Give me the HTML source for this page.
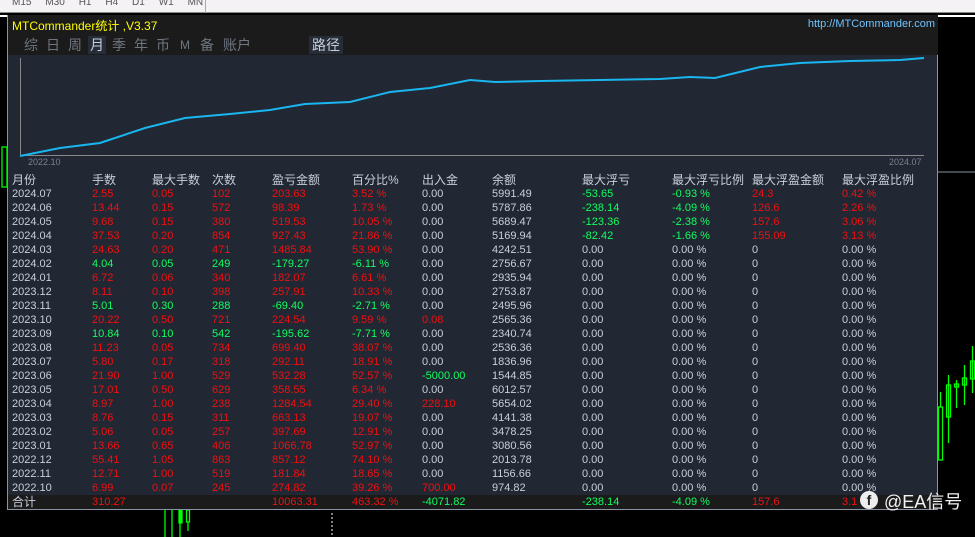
<!DOCTYPE html>
<html><head><meta charset="utf-8"><style>
*{margin:0;padding:0;box-sizing:border-box}
body{width:975px;height:537px;background:#000;position:relative;overflow:hidden;font-family:"Liberation Sans","Noto Sans CJK SC",sans-serif;}
.top{position:absolute;left:0;top:0;width:975px;height:13px;background:#f4f2f4;border-bottom:1px solid #888;font-size:10px;color:#555}
.panel{position:absolute;left:7px;top:15px;width:931px;height:495px;background:#212733;border:1px solid #8a94a4;border-top:none}
.title{position:absolute;left:0;top:0;width:930px;height:40px;background:#1b1b1b}
.t1{position:absolute;left:4px;top:2px;color:#ffff00;font-size:12px}
.url{position:absolute;right:3px;top:3px;color:#6fc4ff;font-size:11px}
.tabs{position:absolute;left:16px;top:21px;font-size:14px;color:#6f7680;letter-spacing:0}
.tabs span{position:absolute;top:0;white-space:nowrap;line-height:18px}
.row{position:absolute;left:4px;height:14px;font-size:11px;line-height:14px;white-space:nowrap;color:#c8d0dc}
.row span{position:absolute;top:0}
.h{font-size:12px}
.r{color:#f01010}.g{color:#10ff60}.w{color:#c8d0dc}
.c0{left:0}.c1{left:80px}.c2{left:140px}.c3{left:200px}.c4{left:260px}.c5{left:340px}.c6{left:410px}.c7{left:480px}.c8{left:570px}.c9{left:660px}.c10{left:740px}.c11{left:830px}
.tot{position:absolute;left:0;top:480px;width:930px;height:14px;background:#1b1b1b}
</style></head><body>
<div class="top"><span style="position:absolute;left:12px;top:-3px">M15 &nbsp;&nbsp;&nbsp; M30 &nbsp;&nbsp;&nbsp; H1 &nbsp;&nbsp;&nbsp; H4 &nbsp;&nbsp;&nbsp; D1 &nbsp;&nbsp;&nbsp; W1 &nbsp;&nbsp;&nbsp; MN</span><div style="position:absolute;left:205px;top:0;width:1px;height:13px;background:#aaa"></div></div>
<div style="position:absolute;left:0;top:15px;width:975px;height:2px;background:#fff"></div>
<svg style="position:absolute;left:0;top:0" width="975" height="537">
<line x1="937" y1="172" x2="975" y2="172" stroke="#8a94a4"/>
<g stroke="#00ff00" fill="none" stroke-width="1.3">
<rect x="938.5" y="407" width="4" height="53"/><line x1="940.5" y1="392" x2="940.5" y2="407"/>
<rect x="946.5" y="385" width="4" height="32"/><line x1="948.5" y1="375" x2="948.5" y2="443"/>
<rect x="954.5" y="384" width="4" height="3"/><line x1="956.5" y1="380" x2="956.5" y2="408"/>
<rect x="962.5" y="378" width="4" height="7"/><line x1="964.5" y1="365" x2="964.5" y2="405"/>
<rect x="970.5" y="361" width="4" height="18"/><line x1="972.5" y1="346" x2="972.5" y2="393"/>
<line x1="165" y1="510" x2="165" y2="537"/><line x1="172" y1="510" x2="172" y2="537"/><line x1="180" y1="510" x2="180" y2="537"/>
<rect x="179" y="510" width="3" height="13" fill="#00ff00"/><rect x="186.5" y="510" width="3" height="12"/><line x1="188" y1="522" x2="188" y2="531"/>
<rect x="2" y="147" width="5" height="40"/>
</g>
<line x1="332" y1="513" x2="332" y2="537" stroke="#fff" stroke-dasharray="2,2"/>
</svg>
<div class="panel">
<div class="title"><div class="t1">MTCommander统计 ,V3.37</div><div class="url">http://MTCommander.com</div>
<div class="tabs"><span style="left:0">综</span><span style="left:22px">日</span><span style="left:44px">周</span><span style="left:64px;background:#262c38;color:#c8d0dc;padding:0 2px">月</span><span style="left:88px">季</span><span style="left:110px">年</span><span style="left:132px">币</span><span style="left:156px;font-size:12px">M</span><span style="left:176px">备</span><span style="left:199px">账户</span><span style="left:285px;background:#262c38;color:#c8d0dc;padding:0 3px">路径</span></div></div>
<svg style="position:absolute;left:0;top:40px" width="930" height="120">
<line x1="12.5" y1="3" x2="12.5" y2="101" stroke="#888"/><line x1="12" y1="100.5" x2="916" y2="100.5" stroke="#888"/>
<polyline fill="none" stroke="#1ab6f0" stroke-width="2" points="12,101 52,93 92,88 137,73 177,63 222,59 262,55 297,49 342,47 382,37 422,33 462,25 487,27 532,26 592,25 652,24 682,22 707,23 752,12 792,8 842,6 892,5 916,3"/>
</svg>
<div style="position:absolute;left:20px;top:142px;font-size:9px;color:#7a8290">2022.10</div>
<div style="position:absolute;left:881px;top:142px;font-size:9px;color:#7a8290">2024.07</div>
<div class="row h" style="top:158px"><span class="c0">月份</span><span class="c1">手数</span><span class="c2">最大手数</span><span class="c3">次数</span><span class="c4">盈亏金额</span><span class="c5">百分比%</span><span class="c6">出入金</span><span class="c7">余额</span><span class="c8">最大浮亏</span><span class="c9">最大浮亏比例</span><span class="c10">最大浮盈金额</span><span class="c11">最大浮盈比例</span></div>
<div class="row" style="top:172px"><span class="c0">2024.07</span><span class="c1 r">2.55</span><span class="c2 r">0.05</span><span class="c3 r">102</span><span class="c4 r">203.63</span><span class="c5 r">3.52 %</span><span class="c6">0.00</span><span class="c7">5991.49</span><span class="c8 g">-53.65</span><span class="c9 g">-0.93 %</span><span class="c10 r">24.3</span><span class="c11 r">0.42 %</span></div>
<div class="row" style="top:186px"><span class="c0">2024.06</span><span class="c1 r">13.44</span><span class="c2 r">0.15</span><span class="c3 r">572</span><span class="c4 r">98.39</span><span class="c5 r">1.73 %</span><span class="c6">0.00</span><span class="c7">5787.86</span><span class="c8 g">-238.14</span><span class="c9 g">-4.09 %</span><span class="c10 r">126.6</span><span class="c11 r">2.26 %</span></div>
<div class="row" style="top:200px"><span class="c0">2024.05</span><span class="c1 r">9.68</span><span class="c2 r">0.15</span><span class="c3 r">380</span><span class="c4 r">519.53</span><span class="c5 r">10.05 %</span><span class="c6">0.00</span><span class="c7">5689.47</span><span class="c8 g">-123.36</span><span class="c9 g">-2.38 %</span><span class="c10 r">157.6</span><span class="c11 r">3.06 %</span></div>
<div class="row" style="top:214px"><span class="c0">2024.04</span><span class="c1 r">37.53</span><span class="c2 r">0.20</span><span class="c3 r">854</span><span class="c4 r">927.43</span><span class="c5 r">21.86 %</span><span class="c6">0.00</span><span class="c7">5169.94</span><span class="c8 g">-82.42</span><span class="c9 g">-1.66 %</span><span class="c10 r">155.09</span><span class="c11 r">3.13 %</span></div>
<div class="row" style="top:228px"><span class="c0">2024.03</span><span class="c1 r">24.63</span><span class="c2 r">0.20</span><span class="c3 r">471</span><span class="c4 r">1485.84</span><span class="c5 r">53.90 %</span><span class="c6">0.00</span><span class="c7">4242.51</span><span class="c8">0.00</span><span class="c9">0.00 %</span><span class="c10">0</span><span class="c11">0.00 %</span></div>
<div class="row" style="top:242px"><span class="c0">2024.02</span><span class="c1 g">4.04</span><span class="c2 g">0.05</span><span class="c3 g">249</span><span class="c4 g">-179.27</span><span class="c5 g">-6.11 %</span><span class="c6">0.00</span><span class="c7">2756.67</span><span class="c8">0.00</span><span class="c9">0.00 %</span><span class="c10">0</span><span class="c11">0.00 %</span></div>
<div class="row" style="top:256px"><span class="c0">2024.01</span><span class="c1 r">6.72</span><span class="c2 r">0.06</span><span class="c3 r">340</span><span class="c4 r">182.07</span><span class="c5 r">6.61 %</span><span class="c6">0.00</span><span class="c7">2935.94</span><span class="c8">0.00</span><span class="c9">0.00 %</span><span class="c10">0</span><span class="c11">0.00 %</span></div>
<div class="row" style="top:270px"><span class="c0">2023.12</span><span class="c1 r">8.11</span><span class="c2 r">0.10</span><span class="c3 r">398</span><span class="c4 r">257.91</span><span class="c5 r">10.33 %</span><span class="c6">0.00</span><span class="c7">2753.87</span><span class="c8">0.00</span><span class="c9">0.00 %</span><span class="c10">0</span><span class="c11">0.00 %</span></div>
<div class="row" style="top:284px"><span class="c0">2023.11</span><span class="c1 g">5.01</span><span class="c2 g">0.30</span><span class="c3 g">288</span><span class="c4 g">-69.40</span><span class="c5 g">-2.71 %</span><span class="c6">0.00</span><span class="c7">2495.96</span><span class="c8">0.00</span><span class="c9">0.00 %</span><span class="c10">0</span><span class="c11">0.00 %</span></div>
<div class="row" style="top:298px"><span class="c0">2023.10</span><span class="c1 r">20.22</span><span class="c2 r">0.50</span><span class="c3 r">721</span><span class="c4 r">224.54</span><span class="c5 r">9.59 %</span><span class="c6 r">0.08</span><span class="c7">2565.36</span><span class="c8">0.00</span><span class="c9">0.00 %</span><span class="c10">0</span><span class="c11">0.00 %</span></div>
<div class="row" style="top:312px"><span class="c0">2023.09</span><span class="c1 g">10.84</span><span class="c2 g">0.10</span><span class="c3 g">542</span><span class="c4 g">-195.62</span><span class="c5 g">-7.71 %</span><span class="c6">0.00</span><span class="c7">2340.74</span><span class="c8">0.00</span><span class="c9">0.00 %</span><span class="c10">0</span><span class="c11">0.00 %</span></div>
<div class="row" style="top:326px"><span class="c0">2023.08</span><span class="c1 r">11.23</span><span class="c2 r">0.05</span><span class="c3 r">734</span><span class="c4 r">699.40</span><span class="c5 r">38.07 %</span><span class="c6">0.00</span><span class="c7">2536.36</span><span class="c8">0.00</span><span class="c9">0.00 %</span><span class="c10">0</span><span class="c11">0.00 %</span></div>
<div class="row" style="top:340px"><span class="c0">2023.07</span><span class="c1 r">5.80</span><span class="c2 r">0.17</span><span class="c3 r">318</span><span class="c4 r">292.11</span><span class="c5 r">18.91 %</span><span class="c6">0.00</span><span class="c7">1836.96</span><span class="c8">0.00</span><span class="c9">0.00 %</span><span class="c10">0</span><span class="c11">0.00 %</span></div>
<div class="row" style="top:354px"><span class="c0">2023.06</span><span class="c1 r">21.90</span><span class="c2 r">1.00</span><span class="c3 r">529</span><span class="c4 r">532.28</span><span class="c5 r">52.57 %</span><span class="c6 g">-5000.00</span><span class="c7">1544.85</span><span class="c8">0.00</span><span class="c9">0.00 %</span><span class="c10">0</span><span class="c11">0.00 %</span></div>
<div class="row" style="top:368px"><span class="c0">2023.05</span><span class="c1 r">17.01</span><span class="c2 r">0.50</span><span class="c3 r">629</span><span class="c4 r">358.55</span><span class="c5 r">6.34 %</span><span class="c6">0.00</span><span class="c7">6012.57</span><span class="c8">0.00</span><span class="c9">0.00 %</span><span class="c10">0</span><span class="c11">0.00 %</span></div>
<div class="row" style="top:382px"><span class="c0">2023.04</span><span class="c1 r">8.97</span><span class="c2 r">1.00</span><span class="c3 r">238</span><span class="c4 r">1284.54</span><span class="c5 r">29.40 %</span><span class="c6 r">228.10</span><span class="c7">5654.02</span><span class="c8">0.00</span><span class="c9">0.00 %</span><span class="c10">0</span><span class="c11">0.00 %</span></div>
<div class="row" style="top:396px"><span class="c0">2023.03</span><span class="c1 r">8.76</span><span class="c2 r">0.15</span><span class="c3 r">311</span><span class="c4 r">663.13</span><span class="c5 r">19.07 %</span><span class="c6">0.00</span><span class="c7">4141.38</span><span class="c8">0.00</span><span class="c9">0.00 %</span><span class="c10">0</span><span class="c11">0.00 %</span></div>
<div class="row" style="top:410px"><span class="c0">2023.02</span><span class="c1 r">5.06</span><span class="c2 r">0.05</span><span class="c3 r">257</span><span class="c4 r">397.69</span><span class="c5 r">12.91 %</span><span class="c6">0.00</span><span class="c7">3478.25</span><span class="c8">0.00</span><span class="c9">0.00 %</span><span class="c10">0</span><span class="c11">0.00 %</span></div>
<div class="row" style="top:424px"><span class="c0">2023.01</span><span class="c1 r">13.66</span><span class="c2 r">0.65</span><span class="c3 r">406</span><span class="c4 r">1066.78</span><span class="c5 r">52.97 %</span><span class="c6">0.00</span><span class="c7">3080.56</span><span class="c8">0.00</span><span class="c9">0.00 %</span><span class="c10">0</span><span class="c11">0.00 %</span></div>
<div class="row" style="top:438px"><span class="c0">2022.12</span><span class="c1 r">55.41</span><span class="c2 r">1.05</span><span class="c3 r">863</span><span class="c4 r">857.12</span><span class="c5 r">74.10 %</span><span class="c6">0.00</span><span class="c7">2013.78</span><span class="c8">0.00</span><span class="c9">0.00 %</span><span class="c10">0</span><span class="c11">0.00 %</span></div>
<div class="row" style="top:452px"><span class="c0">2022.11</span><span class="c1 r">12.71</span><span class="c2 r">1.00</span><span class="c3 r">519</span><span class="c4 r">181.84</span><span class="c5 r">18.65 %</span><span class="c6">0.00</span><span class="c7">1156.66</span><span class="c8">0.00</span><span class="c9">0.00 %</span><span class="c10">0</span><span class="c11">0.00 %</span></div>
<div class="row" style="top:466px"><span class="c0">2022.10</span><span class="c1 r">6.99</span><span class="c2 r">0.07</span><span class="c3 r">245</span><span class="c4 r">274.82</span><span class="c5 r">39.26 %</span><span class="c6 r">700.00</span><span class="c7">974.82</span><span class="c8">0.00</span><span class="c9">0.00 %</span><span class="c10">0</span><span class="c11">0.00 %</span></div>
<div class="tot"></div>
<div class="row" style="top:480px"><span class="c0 h">合计</span><span class="c1 r">310.27</span><span class="c4 r">10063.31</span><span class="c5 r">463.32 %</span><span class="c6 g">-4071.82</span><span class="c8 g">-238.14</span><span class="c9 g">-4.09 %</span><span class="c10 r">157.6</span><span class="c11 r">3.1</span></div>
</div>
<div style="position:absolute;left:860px;top:491px;width:18px;height:18px;border-radius:50%;background:#eee;color:#222;font-size:14px;font-weight:bold;text-align:center;line-height:19px">f</div>
<div style="position:absolute;left:884px;top:488px;font-size:18px;color:#f2f2f2;white-space:nowrap">@EA信号</div>
</body></html>
